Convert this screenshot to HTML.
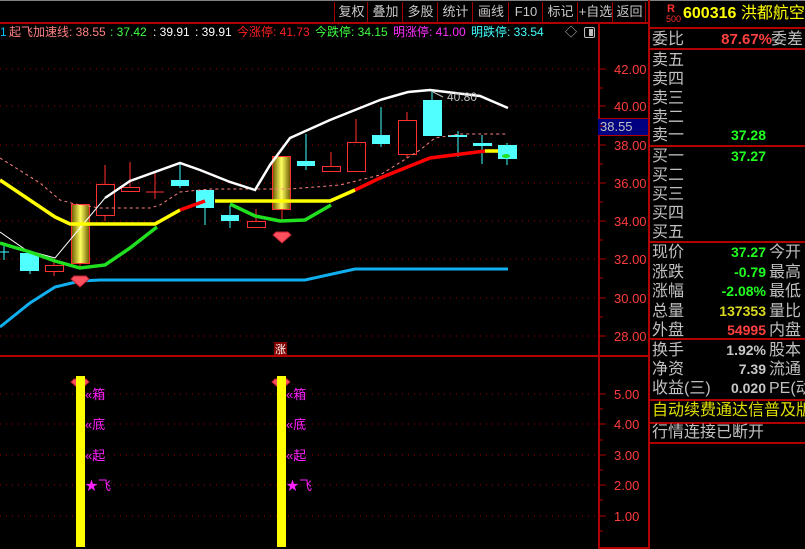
<!DOCTYPE html>
<html><head><meta charset="utf-8"><style>
body{margin:0;background:#000;width:805px;height:549px;overflow:hidden;position:relative;font-family:"Liberation Sans","Noto Sans CJK SC",sans-serif}
.a{position:absolute;white-space:nowrap;line-height:1}
.tb{position:absolute;top:2px;height:20px;color:#c8c8c8;font-size:13px;line-height:20px;text-align:center;border-left:1px solid #a00000}
.r{position:absolute;left:652px;font-size:16px;color:#c0c0c0;line-height:19px;white-space:nowrap}
.n{position:absolute;font-size:14px;font-weight:bold;line-height:19px;text-align:right;white-space:nowrap}
.ax{position:absolute;left:614px;font-size:13px;color:#ff3c3c;line-height:1}
.hl{position:absolute;left:649px;width:156px;height:2px;background:#b00000}
</style></head><body>
<div class="a" style="left:0;top:0;width:805px;height:1px;background:#808080"></div>
<div class="tb" style="left:334px;width:33px">复权</div>
<div class="tb" style="left:367px;width:35px">叠加</div>
<div class="tb" style="left:402px;width:35px">多股</div>
<div class="tb" style="left:437px;width:35px">统计</div>
<div class="tb" style="left:472px;width:36px">画线</div>
<div class="tb" style="left:508px;width:34px">F10</div>
<div class="tb" style="left:542px;width:35px">标记</div>
<div class="tb" style="left:577px;width:35px">+自选</div>
<div class="tb" style="left:612px;width:33px">返回</div>
<div class="a" style="left:645px;top:2px;width:1px;height:20px;background:#a00000"></div>
<div class="a" style="left:0;top:22px;width:649px;height:2px;background:#b00000"></div>
<div class="a" style="left:598px;top:22px;width:2px;height:527px;background:#b00000"></div>
<div class="a" style="left:648px;top:0;width:2px;height:549px;background:#b00000"></div>
<div class="a" style="left:0;top:355px;width:649px;height:2px;background:#b00000"></div>
<div class="a" style="left:598px;top:118px;width:50px;height:16px;background:#000080;border-top:1px solid #b00000;border-bottom:1px solid #b00000"></div>
<div class="a" style="left:600px;top:120px;font-size:13px;color:#c0c0c0">38.55</div>
<div class="a" style="left:645px;top:547px;width:0"></div>
<div class="a" style="left:598px;top:547px;width:50px;height:2px;background:#b00000"></div>

<div class="a" style="left:0;top:26px;font-size:12px;color:#00c0ff">1</div>
<div class="a" style="left:9px;top:26px;font-size:12px;color:#ff8080">起飞加速线: 38.55</div>
<div class="a" style="left:110px;top:26px;font-size:12px;color:#40ff40">: 37.42</div>
<div class="a" style="left:153px;top:26px;font-size:12px;color:#fff">: 39.91</div>
<div class="a" style="left:195px;top:26px;font-size:12px;color:#fff">: 39.91</div>
<div class="a" style="left:237px;top:26px;font-size:12px;color:#ff2020">今涨停: 41.73</div>
<div class="a" style="left:315px;top:26px;font-size:12px;color:#40ff40">今跌停: 34.15</div>
<div class="a" style="left:393px;top:26px;font-size:12px;color:#ff30ff">明涨停: 41.00</div>
<div class="a" style="left:471px;top:26px;font-size:12px;color:#40ffff">明跌停: 33.54</div>
<div class="a" style="left:565px;top:26px;font-size:12px;color:#c0c0c0">◇</div>
<div class="a" style="left:584px;top:27px;width:9px;height:9px;border:1px solid #c0c0c0;border-radius:2px"><div style="position:absolute;right:1px;top:1px;width:4px;height:7px;background:#c0c0c0"></div></div>

<div class="ax" style="top:63px">42.00</div>
<div class="ax" style="top:100px">40.00</div>
<div class="ax" style="top:139px">38.00</div>
<div class="ax" style="top:177px">36.00</div>
<div class="ax" style="top:215px">34.00</div>
<div class="ax" style="top:253px">32.00</div>
<div class="ax" style="top:292px">30.00</div>
<div class="ax" style="top:330px">28.00</div>
<div class="ax" style="top:388px">5.00</div>
<div class="ax" style="top:418px">4.00</div>
<div class="ax" style="top:449px">3.00</div>
<div class="ax" style="top:479px">2.00</div>
<div class="ax" style="top:510px">1.00</div>

<svg class="a" style="left:0;top:0" width="649" height="549">
<defs><linearGradient id="g" x1="0" x2="1"><stop offset="0" stop-color="#6a5a00"/><stop offset=".5" stop-color="#ffff60"/><stop offset="1" stop-color="#6a5a00"/></linearGradient></defs>
<g stroke="#a00000" stroke-dasharray="1 5" stroke-width="1">
<path d="M0 69H598M0 106H598M0 145H598M0 183H598M0 221H598M0 259H598M0 298H598M0 336H598M0 394H598M0 424H598M0 455H598M0 485H598M0 516H598"/></g>
<g stroke="#b00000" stroke-width="1"><path d="M600 69h6M600 106h6M600 145h6M600 183h6M600 221h6M600 259h6M600 298h6M600 336h6M600 394h6M600 424h6M600 455h6M600 485h6M600 516h6M600 88h3M600 126h3M600 164h3M600 202h3M600 240h3M600 278h3M600 317h3M600 409h3M600 440h3M600 470h3M600 500h3M600 531h3"/></g>
<!-- candles -->
<g stroke="#40ffff" fill="#50ffff">
<path d="M4 246v14M0 252h9"/>
<path d="M30 271v3"/><rect x="20" y="253" width="19" height="18" stroke="none"/>
<path d="M180 162v26"/><rect x="171" y="180" width="18" height="6" stroke="none"/>
<path d="M205 208v17"/><rect x="196" y="190" width="18" height="18" stroke="none"/>
<path d="M230 205v23"/><rect x="221" y="215" width="18" height="6" stroke="none"/>
<path d="M306 134v36"/><rect x="297" y="161" width="18" height="5" stroke="none"/>
<path d="M381 107v40"/><rect x="372" y="135" width="18" height="9" stroke="none"/>
<path d="M432 90v46"/><rect x="423" y="100" width="19" height="36" stroke="none"/>
<path d="M458 131v26"/><rect x="448" y="135" width="19" height="2" stroke="none"/>
<path d="M482 135v29"/><rect x="473" y="143" width="19" height="3" stroke="none"/>
<path d="M507 143v22"/><rect x="498" y="145" width="19" height="14" stroke="none"/>
</g>
<g stroke="#ff3030" fill="none">
<rect x="45.5" y="265.5" width="18" height="6"/><path d="M54 259v6M54 272v4"/>
<rect x="96.5" y="184.5" width="18" height="31"/><path d="M105 165v19M105 216v5"/>
<rect x="121.5" y="187.5" width="18" height="4"/><path d="M130 162v25"/>
<path d="M146 192h18M155 173v26"/>
<rect x="247.5" y="221.5" width="18" height="6"/><path d="M256 209v12"/>
<rect x="322.5" y="166.5" width="18" height="5"/><path d="M331 152v14"/>
<rect x="347.5" y="142.5" width="18" height="29"/><path d="M356 119v23"/>
<rect x="398.5" y="120.5" width="18" height="34"/><path d="M407 112v8M407 155v3"/>
<path d="M80 263v6M282 209v12"/>
</g>
<rect x="71.5" y="204.5" width="18" height="59" fill="url(#g)" stroke="#ff3030"/>
<rect x="272.5" y="156.5" width="18" height="53" fill="url(#g)" stroke="#ff3030"/>
<!-- lines -->
<path d="M0 158L40 183L60 200L75 204L100 208L150 208L160 205L180 192L210 189L290 189L340 185L380 175L420 150L435 138L460 134L508 134" stroke="#ff8080" fill="none" stroke-dasharray="3 3"/>
<path d="M0 232L26 250L55 258" stroke="#fff" fill="none"/>
<path d="M55 258L105 198" stroke="#fff" fill="none"/>
<path d="M105 198L130 181L180 163L200 170L230 182L255 190L270 165L290 138L330 120L380 100L408 92L430 90L480 96L508 108" stroke="#fff" fill="none" stroke-width="2.5"/>
<path d="M0 327L30 303L55 287L80 281L100 280L305 280L355 269L508 269" stroke="#10b0f0" fill="none" stroke-width="3"/>
<path d="M0 180L55 217L70 224L155 224L180 210M215 201L330 201L355 190M485 151L498 151" stroke="#ffff00" fill="none" stroke-width="3.5"/>
<path d="M180 210L205 201M355 190L380 178L430 158L485 151" stroke="#ff0000" fill="none" stroke-width="3.5"/>
<path d="M0 243L30 252L55 261L80 268L105 265L130 248L157 227M230 204L255 216L280 221L305 220L331 205" stroke="#20e020" fill="none" stroke-width="3.5"/>
<ellipse cx="506" cy="156" rx="4" ry="2" fill="#20e020"/>
<text x="447" y="101" font-size="12" fill="#c0c0c0" font-family="Liberation Sans">40.80</text>
<path d="M433 92l10 5" stroke="#c0c0c0"/>
<!-- gems -->
<g fill="#ff5060" stroke="#c02030"><path d="M74 276h12l3 3-9 8-9-8z"/><path d="M276 232h12l3 3-9 8-9-8z"/><path d="M74 379h12l3 3-9 8-9-8z"/><path d="M275 379h12l3 3-9 8-9-8z"/></g>
<!-- lower bars -->
<rect x="76" y="376" width="9" height="171" fill="#ffff00"/>
<rect x="277" y="376" width="9" height="171" fill="#ffff00"/>
<g fill="#ff20ff" font-size="13" font-family="Liberation Sans,Noto Sans CJK SC,sans-serif">
<text x="85" y="399">«箱</text><text x="85" y="429">«底</text><text x="85" y="460">«起</text><text x="85" y="490">★飞</text>
<text x="286" y="399">«箱</text><text x="286" y="429">«底</text><text x="286" y="460">«起</text><text x="286" y="490">★飞</text>
</g>
<rect x="274" y="342" width="13" height="13" fill="#800000"/>
<text x="275" y="353" font-size="11" fill="#fff" font-family="Noto Sans CJK SC,sans-serif">涨</text>
</svg>

<!-- right panel -->
<div class="a" style="left:667px;top:4px;font-size:11px;color:#ff3030;font-weight:bold">R</div>
<div class="a" style="left:666px;top:15px;font-size:9px;color:#ff3030">500</div>
<div class="a" style="left:683px;top:6px;font-size:16px;color:#ffff00;font-weight:bold">600316 <span style="font-weight:normal">洪都航空</span></div>
<div class="hl" style="top:27px"></div>
<div class="r" style="top:30px">委比</div>
<div class="n" style="left:700px;width:72px;top:30px;color:#ff4040;font-size:15px">87.67%</div>
<div class="r" style="left:771px;top:30px">委差</div>
<div class="hl" style="top:48px"></div>
<div class="r" style="top:51px">卖五</div>
<div class="r" style="top:70px">卖四</div>
<div class="r" style="top:89px">卖三</div>
<div class="r" style="top:108px">卖二</div>
<div class="r" style="top:126px">卖一</div>
<div class="n" style="left:700px;width:66px;top:126px;color:#20ff20">37.28</div>
<div class="hl" style="top:145px"></div>
<div class="r" style="top:147px">买一</div>
<div class="n" style="left:700px;width:66px;top:147px;color:#20ff20">37.27</div>
<div class="r" style="top:166px">买二</div>
<div class="r" style="top:185px">买三</div>
<div class="r" style="top:204px">买四</div>
<div class="r" style="top:223px">买五</div>
<div class="hl" style="top:241px"></div>
<div class="r" style="top:243px">现价</div><div class="n" style="left:700px;width:66px;top:243px;color:#20ff20">37.27</div><div class="r" style="left:769px;top:243px">今开</div>
<div class="r" style="top:263px">涨跌</div><div class="n" style="left:700px;width:66px;top:263px;color:#20ff20">-0.79</div><div class="r" style="left:769px;top:263px">最高</div>
<div class="r" style="top:282px">涨幅</div><div class="n" style="left:700px;width:66px;top:282px;color:#20ff20">-2.08%</div><div class="r" style="left:769px;top:282px">最低</div>
<div class="r" style="top:302px">总量</div><div class="n" style="left:700px;width:66px;top:302px;color:#d8d820">137353</div><div class="r" style="left:769px;top:302px">量比</div>
<div class="r" style="top:321px">外盘</div><div class="n" style="left:700px;width:66px;top:321px;color:#ff4040">54995</div><div class="r" style="left:769px;top:321px">内盘</div>
<div class="hl" style="top:338px"></div>
<div class="r" style="top:341px">换手</div><div class="n" style="left:700px;width:66px;top:341px;color:#c8c8c8">1.92%</div><div class="r" style="left:769px;top:341px">股本</div>
<div class="r" style="top:360px">净资</div><div class="n" style="left:700px;width:66px;top:360px;color:#c8c8c8">7.39</div><div class="r" style="left:769px;top:360px">流通</div>
<div class="r" style="top:379px">收益(三)</div><div class="n" style="left:700px;width:66px;top:379px;color:#c8c8c8">0.020</div><div class="r" style="left:769px;top:379px">PE(动</div>
<div class="hl" style="top:399px"></div>
<div class="r" style="top:401px;color:#e0e000">自动续费通达信普及版</div>
<div class="hl" style="top:422px"></div>
<div class="r" style="top:423px">行情连接已断开</div>
<div class="hl" style="top:442px"></div>
</body></html>
